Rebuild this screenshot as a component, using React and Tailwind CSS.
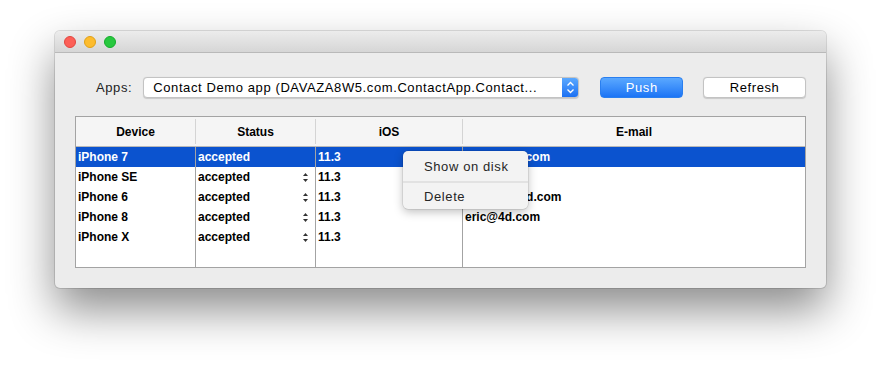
import React from "react";

const rows = [
  { d: "iPhone 7", s: "accepted", v: "11.3", e: "david@4d.com", sel: true },
  { d: "iPhone SE", s: "accepted", v: "11.3", e: "" },
  { d: "iPhone 6", s: "accepted", v: "11.3", e: "thomas@4d.com" },
  { d: "iPhone 8", s: "accepted", v: "11.3", e: "eric@4d.com" },
  { d: "iPhone X", s: "accepted", v: "11.3", e: "" },
];

function Stepper() {
  return (
    <svg width="7" height="11" viewBox="0 0 7 11" className="shrink-0">
      <path d="M3.5 1 L6 4 L1 4 Z" fill="#333" />
      <path d="M3.5 10 L6 7 L1 7 Z" fill="#333" />
    </svg>
  );
}

function Column({ width, field, stepper, last }) {
  return (
    <div
      className={`flex flex-col ${last ? "flex-1" : "border-r border-[#a3a3a3]"}`}
      style={last ? undefined : { width }}
    >
      {rows.map((r, i) => (
        <div
          key={i}
          className={`h-5 flex items-center pl-[2px] pr-[6px] text-[12px] font-bold leading-none ${
            r.sel ? "bg-[#0b53cf] text-white" : "text-black"
          }`}
        >
          <span className="flex-1 whitespace-nowrap">{r[field]}</span>
          {stepper && !r.sel && <Stepper />}
        </div>
      ))}
    </div>
  );
}

export default function App() {
  return (
    <div
      className="w-[882px] h-[368px] bg-white overflow-hidden pt-[31px] pl-[55px]"
      style={{ fontFamily: '"Liberation Sans", Arial, sans-serif' }}
    >
      <div className="relative w-[771px] h-[257px] bg-[#ececec] rounded-[5px] shadow-[0_22px_45px_rgba(0,0,0,0.45),0_0_0_1px_rgba(0,0,0,0.12)] flex flex-col">
        {/* title bar */}
        <div className="h-[23px] rounded-t-[5px] bg-gradient-to-b from-[#ececec] to-[#d6d6d6] border-b border-[#b9b9b9] flex items-center gap-2 pl-[9px]">
          <div className="w-3 h-3 rounded-full bg-[#fc5f57] border border-[#e2463f]" />
          <div className="w-3 h-3 rounded-full bg-[#fdbc2e] border border-[#e1a116]" />
          <div className="w-3 h-3 rounded-full bg-[#28c83f] border border-[#14ad2a]" />
        </div>

        <div className="flex-1 flex flex-col px-5 pt-[24px] pb-5">
          {/* toolbar row */}
          <div className="flex items-center h-[21px] text-[13px] tracking-[0.6px]">
            <span className="ml-[21px] text-[#222]">Apps:</span>
            <div className="ml-[11px] w-[437px] h-[21px] flex rounded-[4px] bg-white border border-[#c3c3c3] overflow-hidden shadow-[0_0.5px_1px_rgba(0,0,0,0.15)]">
              <span className="flex-1 pl-[9px] leading-[19px] text-black whitespace-nowrap overflow-hidden">
                Contact Demo app (DAVAZA8W5.com.ContactApp.Contact...
              </span>
              <div className="w-[16px] bg-gradient-to-b from-[#5aa8ff] to-[#1b70f3] flex items-center justify-center">
                <svg width="9" height="13" viewBox="0 0 9 13">
                  <path d="M1.5 4.5 L4.5 1.5 L7.5 4.5" stroke="white" strokeWidth="1.3" fill="none" />
                  <path d="M1.5 8.5 L4.5 11.5 L7.5 8.5" stroke="white" strokeWidth="1.3" fill="none" />
                </svg>
              </div>
            </div>
            <button className="ml-[21px] w-[83px] h-[21px] rounded-[4px] bg-gradient-to-b from-[#5aa8ff] to-[#1b74f5] border border-[#2a7fef] text-white leading-none flex items-center justify-center">
              Push
            </button>
            <button className="ml-[20px] w-[103px] h-[21px] rounded-[4px] bg-white border border-[#c3c3c3] text-black leading-none flex items-center justify-center shadow-[0_0.5px_1px_rgba(0,0,0,0.15)]">
              Refresh
            </button>
          </div>

          {/* table */}
          <div className="mt-[18px] h-[152px] border border-[#a3a3a3] bg-white flex flex-col">
            <div className="h-[30px] bg-[#f5f5f5] border-b border-[#b9b9b9] flex text-[12px] font-bold text-black">
              <div className="w-[120px] flex items-center justify-center border-r border-[#d4d4d4] my-[2px]">Device</div>
              <div className="w-[120px] flex items-center justify-center border-r border-[#d4d4d4] my-[2px]">Status</div>
              <div className="w-[147px] flex items-center justify-center border-r border-[#d4d4d4] my-[2px]">iOS</div>
              <div className="flex-1 flex items-center justify-center">E-mail</div>
            </div>
            <div className="flex-1 flex">
              <Column width={120} field="d" />
              <Column width={120} field="s" stepper />
              <Column width={147} field="v" />
              <Column field="e" last />
            </div>
          </div>
        </div>

        {/* context menu */}
        <div className="absolute left-[348px] top-[120px] w-[125px] h-[58px] rounded-[5px] bg-[#f3f3f3] shadow-[0_3px_10px_rgba(0,0,0,0.25),0_0_0_0.5px_rgba(0,0,0,0.15)] flex flex-col pt-[3px] text-[13px] tracking-[0.6px] text-[#262626]">
          <div className="h-[26px] flex items-center pl-[21px]">Show on disk</div>
          <div className="h-[2px] bg-[#e2e2e2] my-[1px]" />
          <div className="h-[25px] flex items-center pl-[21px]">Delete</div>
        </div>
      </div>
    </div>
  );
}
